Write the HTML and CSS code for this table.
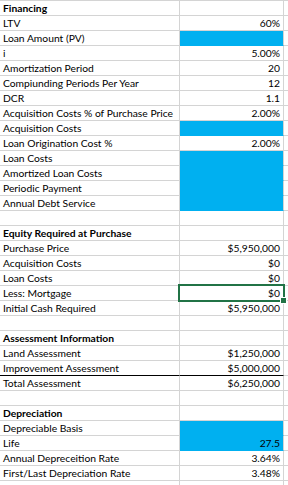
FILE: index.html
```html
<!DOCTYPE html>
<html>
<head>
<meta charset="utf-8">
<link rel="stylesheet" href="styles.css">
</head>
<body>
<div class="sheet">
  <div class="row head"><div class="a">Financing</div><div class="b"></div><div class="c"></div></div>
  <div class="row"><div class="a">LTV</div><div class="b">60%</div><div class="c"></div></div>
  <div class="row"><div class="a">Loan Amount (PV)</div><div class="b fill"></div><div class="c"></div></div>
  <div class="row"><div class="a">i</div><div class="b">5.00%</div><div class="c"></div></div>
  <div class="row"><div class="a">Amortization Period</div><div class="b">20</div><div class="c"></div></div>
  <div class="row"><div class="a">Compiunding Periods Per Year</div><div class="b">12</div><div class="c"></div></div>
  <div class="row"><div class="a">DCR</div><div class="b">1.1</div><div class="c"></div></div>
  <div class="row"><div class="a">Acquisition Costs % of Purchase Price</div><div class="b">2.00%</div><div class="c"></div></div>
  <div class="row"><div class="a">Acquisition Costs</div><div class="b fill"></div><div class="c"></div></div>
  <div class="row"><div class="a">Loan Origination Cost %</div><div class="b">2.00%</div><div class="c"></div></div>
  <div class="row"><div class="a">Loan Costs</div><div class="b fill"></div><div class="c"></div></div>
  <div class="row"><div class="a">Amortized Loan Costs</div><div class="b fill"></div><div class="c"></div></div>
  <div class="row"><div class="a">Periodic Payment</div><div class="b fill"></div><div class="c"></div></div>
  <div class="row"><div class="a">Annual Debt Service</div><div class="b fill"></div><div class="c"></div></div>
  <div class="row"><div class="a"></div><div class="b"></div><div class="c"></div></div>
  <div class="row head"><div class="a">Equity Required at Purchase</div><div class="b"></div><div class="c"></div></div>
  <div class="row"><div class="a">Purchase Price</div><div class="b">$5,950,000</div><div class="c"></div></div>
  <div class="row"><div class="a">Acquisition Costs</div><div class="b">$0</div><div class="c"></div></div>
  <div class="row"><div class="a">Loan Costs</div><div class="b">$0</div><div class="c"></div></div>
  <div class="row"><div class="a">Less: Mortgage</div><div class="b selected">$0</div><div class="c"></div></div>
  <div class="row"><div class="a">Initial Cash Required</div><div class="b">$5,950,000</div><div class="c"></div></div>
  <div class="row"><div class="a"></div><div class="b"></div><div class="c"></div></div>
  <div class="row head"><div class="a">Assessment Information</div><div class="b"></div><div class="c"></div></div>
  <div class="row"><div class="a">Land Assessment</div><div class="b">$1,250,000</div><div class="c"></div></div>
  <div class="row total-above"><div class="a">Improvement Assessment</div><div class="b">$5,000,000</div><div class="c"></div></div>
  <div class="row"><div class="a">Total Assessment</div><div class="b">$6,250,000</div><div class="c"></div></div>
  <div class="row"><div class="a"></div><div class="b"></div><div class="c"></div></div>
  <div class="row head"><div class="a">Depreciation</div><div class="b"></div><div class="c"></div></div>
  <div class="row"><div class="a">Depreciable Basis</div><div class="b fill"></div><div class="c"></div></div>
  <div class="row"><div class="a">Life</div><div class="b fill">27.5</div><div class="c"></div></div>
  <div class="row"><div class="a">Annual Depreceition Rate</div><div class="b">3.64%</div><div class="c"></div></div>
  <div class="row"><div class="a">First/Last Depreciation Rate</div><div class="b">3.48%</div><div class="c"></div></div>
  <div class="row"><div class="a"></div><div class="b"></div><div class="c"></div></div>
</div>
</body>
</html>
```

FILE: styles.css
```css
html, body {
  margin: 0;
  padding: 0;
  background: #ffffff;
}

body {
  width: 288px;
  height: 485px;
  overflow: hidden;
  font-family: "Lato", "Liberation Sans", sans-serif;
  font-size: 10.3px;
  color: #000000;
}

.sheet {
  border-top: 1px solid #d4d4d4;
}

.row {
  display: grid;
  grid-template-columns: 180px 104px 1fr;
  height: 15px;
}

.row > div {
  box-sizing: border-box;
  height: 15px;
  line-height: 15px;
  border-bottom: 1px solid #d4d4d4;
  white-space: nowrap;
  overflow: visible;
}

.a {
  padding-left: 3px;
  border-right: 1px solid #d4d4d4;
}

.b {
  padding-right: 3px;
  text-align: right;
  border-right: 1px solid #d4d4d4;
}

.head .a {
  font-weight: bold;
}

.fill {
  background: #00b0f0;
  border-bottom-color: #00b0f0 !important;
}

.total-above .a,
.total-above .b {
  border-bottom-color: #000000 !important;
}

.selected {
  position: relative;
}

.selected::after {
  content: "";
  position: absolute;
  left: -2px;
  top: -2px;
  width: 107px;
  height: 18px;
  box-sizing: border-box;
  border: 2px solid #217346;
}

.selected::before {
  content: "";
  position: absolute;
  right: -3px;
  bottom: -3px;
  width: 5px;
  height: 5px;
  background: #217346;
  box-shadow: 0 0 0 1px #ffffff;
  z-index: 1;
}
```
